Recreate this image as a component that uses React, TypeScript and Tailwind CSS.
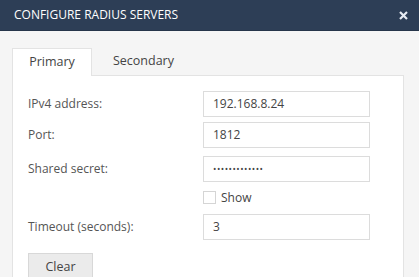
import React from "react";

export default function App() {
  const font = { fontFamily: '"Open Sans", sans-serif' };
  return (
    <div className="w-[419px] h-[277px] overflow-hidden bg-[#f5f5f5] text-[12px] text-[#444]" style={font}>
      <div className="h-[31px] bg-[#2d3e56] border-b border-[#26354a] flex items-center justify-between pl-[14px] pr-[11px]">
        <span className="text-white text-[12px]">CONFIGURE RADIUS SERVERS</span>
        <svg width="9" height="9" viewBox="0 0 9 9">
          <path d="M1 1 L8 8 M8 1 L1 8" stroke="#e6ebf2" strokeWidth="2.2" strokeLinecap="butt" />
        </svg>
      </div>
      <div className="pl-[12px] pr-[15px] pt-[17px]">
        <div className="flex h-[28px] relative z-10">
          <div className="w-[80px] h-[28px] bg-white border border-b-0 border-[#e3e3e3] flex items-center justify-center text-[#444] text-[12.5px]">
            Primary
          </div>
          <div className="w-[103px] h-[27px] flex items-center justify-center text-[#444] text-[12.5px]">Secondary</div>
        </div>
        <div className="bg-white border border-[#e3e3e3] -mt-[1px] h-[220px] pl-[15px] pr-[33px] pt-[15px]">
          <div className="flex flex-col">
            <Row label="IPv4 address:" value="192.168.8.24" />
            <div className="h-[5px]" />
            <Row label="Port:" value="1812" />
            <div className="h-[8px]" />
            <Row label="Shared secret:" value="•••••••••••••" secret />
            <div className="flex items-center mt-[9px] pl-[175px] h-[13px]">
              <div className="w-[13px] h-[13px] border border-[#d5d5d5] bg-white" />
              <span className="ml-[5px] text-[#444]">Show</span>
            </div>
            <div className="h-[10px]" />
            <Row label="Timeout (seconds):" value="3" />
            <div className="mt-[13px]">
              <button className="w-[65px] h-[28px] bg-[#ebebeb] border border-[#d8d8d8] text-[#444] text-[12.5px] flex items-center justify-center">Clear</button>
            </div>
          </div>
        </div>
      </div>
    </div>
  );
}

function Row({ label, value, secret }: { label: string; value: string; secret?: boolean }) {
  return (
    <div className="flex items-center h-[26px]">
      <div className="w-[175px] text-[#555]">{label}</div>
      <div className="w-[167px] h-[26px] border border-[#dcdcdc] bg-white flex items-center pl-[9px] text-[#444]">
        <span className={secret ? "text-[9px] tracking-[0.5px]" : ""}>{value}</span>
      </div>
    </div>
  );
}
